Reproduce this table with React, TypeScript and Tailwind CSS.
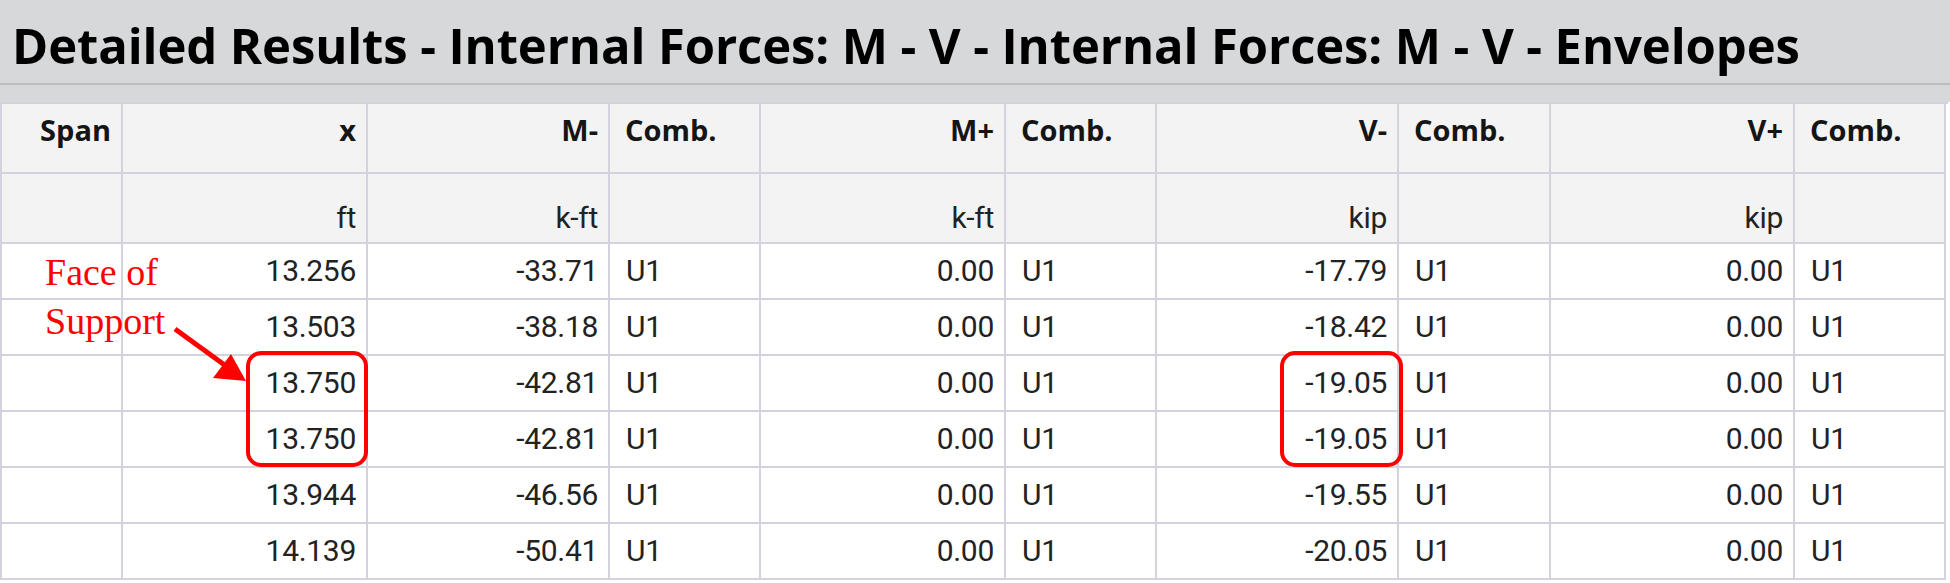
import React from "react";

const headers = ["Span", "x", "M-", "Comb.", "M+", "Comb.", "V-", "Comb.", "V+", "Comb."];
const units = ["", "ft", "k-ft", "", "k-ft", "", "kip", "", "kip", ""];
const rows = [
  ["13.256", "-33.71", "0.00", "-17.79", "0.00"],
  ["13.503", "-38.18", "0.00", "-18.42", "0.00"],
  ["13.750", "-42.81", "0.00", "-19.05", "0.00"],
  ["13.750", "-42.81", "0.00", "-19.05", "0.00"],
  ["13.944", "-46.56", "0.00", "-19.55", "0.00"],
  ["14.139", "-50.41", "0.00", "-20.05", "0.00"],
];

const isComb = (i: number) => i === 3 || i === 5 || i === 7 || i === 9;

const headFont = "font-['Open_Sans',sans-serif] font-bold text-[29px] leading-none text-[#151515]";
const dataFont = "font-['Roboto',sans-serif] text-[30px] leading-none tracking-[-0.3px] text-[#222]";

export default function App() {
  return (
    <div className="relative w-[1950px] h-[583px] bg-white overflow-hidden">
      <div className="h-[83px] bg-[#d7d8da] pl-[12px] pt-[21px]">
        <h1 className="font-['Open_Sans',sans-serif] font-bold text-[49px] leading-none tracking-[-0.1px] text-black whitespace-nowrap">
          Detailed Results - Internal Forces: M - V - Internal Forces: M - V - Envelopes
        </h1>
      </div>
      <div className="h-[2px] bg-[#bdbdbf]" />
      <div className="h-[17px] bg-[#d7d8da]" />
      <div className="grid w-[1946px] grid-cols-[121px_245px_242px_151px_245px_151px_242px_152px_244px_151px] border-l-2 border-t-2 border-[#d3d3df] box-content">
        {headers.map((h, i) => (
          <div
            key={"h" + i}
            className={`h-[70px] bg-[#f3f3f3] border-r-2 border-b-2 border-[#d3d3df] flex items-start pt-[11px] ${headFont} ${
              isComb(i) ? "justify-start pl-[15px]" : "justify-end pr-[10px]"
            }`}
          >
            {h}
          </div>
        ))}
        {units.map((u, i) => (
          <div
            key={"u" + i}
            className={`h-[70px] bg-[#f3f3f3] border-r-2 border-b-2 border-[#d3d3df] flex items-end pb-[9px] ${dataFont} ${
              isComb(i) ? "justify-start pl-[16px]" : "justify-end pr-[10px]"
            }`}
          >
            {u}
          </div>
        ))}
        {rows.map((r, ri) => {
          const cells = ["", r[0], r[1], "U1", r[2], "U1", r[3], "U1", r[4], "U1"];
          return cells.map((c, i) => (
            <div
              key={`r${ri}-${i}`}
              className={`h-[56px] bg-white border-r-2 border-b-2 border-[#d3d3df] flex items-center ${dataFont} ${
                isComb(i) ? "justify-start pl-[16px]" : "justify-end pr-[10px]"
              }`}
            >
              {c}
            </div>
          ));
        })}
      </div>

      <div className="absolute left-[45px] top-[248px] font-['Liberation_Serif',serif] text-[38px] leading-[49px] text-[#ff0000]">
        <div>Face of</div>
        <div>Support</div>
      </div>

      <svg className="absolute left-0 top-0" width="1950" height="583" viewBox="0 0 1950 583">
        <line x1="175" y1="329" x2="226" y2="366" stroke="#ff0000" strokeWidth="5" />
        <polygon points="246,381 213,378 231,354" fill="#ff0000" />
      </svg>

      <div className="absolute left-[246px] top-[351px] w-[122px] h-[116px] rounded-[15px] border-[4px] border-[#ff0000]" />
      <div className="absolute left-[1280px] top-[351px] w-[123px] h-[116px] rounded-[15px] border-[4px] border-[#ff0000]" />
    </div>
  );
}
